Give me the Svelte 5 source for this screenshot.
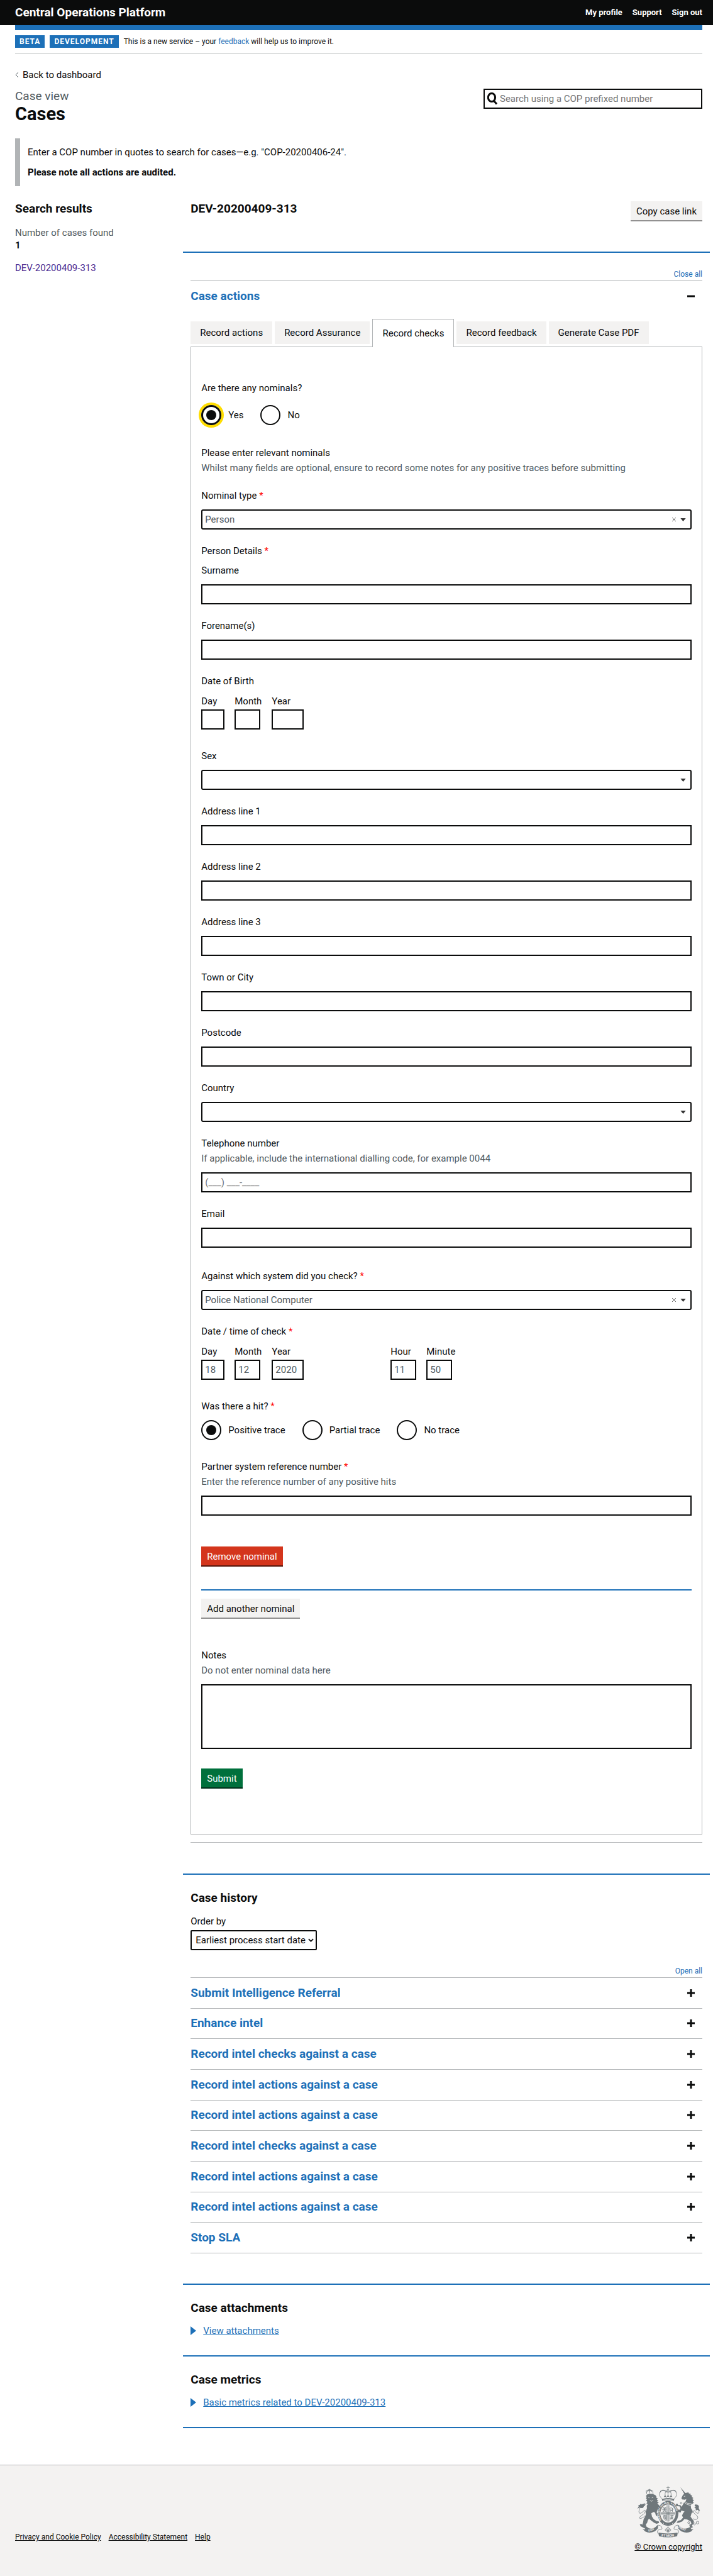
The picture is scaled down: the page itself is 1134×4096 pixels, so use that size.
<script>
  const headerLinks = ['My profile', 'Support', 'Sign out'];
  const tabs = ['Record actions', 'Record Assurance', 'Record checks', 'Record feedback', 'Generate Case PDF'];
  const activeTab = 'Record checks';

  const personFields = [
    { id: 'surname', label: 'Surname', kind: 'text' },
    { id: 'forenames', label: 'Forename(s)', kind: 'text' },
    {
      id: 'dob',
      label: 'Date of Birth',
      kind: 'date',
      parts: [
        { label: 'Day', size: 'day', value: '' },
        { label: 'Month', size: 'month', value: '' },
        { label: 'Year', size: 'year', value: '' }
      ]
    },
    { id: 'sex', label: 'Sex', kind: 'select' },
    { id: 'address1', label: 'Address line 1', kind: 'text' },
    { id: 'address2', label: 'Address line 2', kind: 'text' },
    { id: 'address3', label: 'Address line 3', kind: 'text' },
    { id: 'town', label: 'Town or City', kind: 'text' },
    { id: 'postcode', label: 'Postcode', kind: 'text' },
    { id: 'country', label: 'Country', kind: 'select' },
    {
      id: 'telephone',
      label: 'Telephone number',
      kind: 'text',
      hint: 'If applicable, include the international dialling code, for example 0044',
      placeholder: '(___) ___-____'
    },
    { id: 'email', label: 'Email', kind: 'text' }
  ];

  const checkDate = [
    { label: 'Day', size: 'day', value: '18' },
    { label: 'Month', size: 'month', value: '12' },
    { label: 'Year', size: 'year', value: '2020' }
  ];
  const checkTime = [
    { label: 'Hour', size: 'month', value: '11' },
    { label: 'Minute', size: 'month', value: '50' }
  ];
  const traces = ['Positive trace', 'Partial trace', 'No trace'];

  const history = [
    'Submit Intelligence Referral',
    'Enhance intel',
    'Record intel checks against a case',
    'Record intel actions against a case',
    'Record intel actions against a case',
    'Record intel checks against a case',
    'Record intel actions against a case',
    'Record intel actions against a case',
    'Stop SLA'
  ];
  const footerLinks = ['Privacy and Cookie Policy', 'Accessibility Statement', 'Help'];
</script>

{#snippet required()}<span class="required">*</span>{/snippet}

{#snippet dateParts(prefix, parts)}
  <div class="date-parts">
    {#each parts as part}
      <div class="date-part">
        <label for="{prefix}-{part.label}">{part.label}</label>
        <input id="{prefix}-{part.label}" class="box {part.size}" type="text" inputmode="numeric" value={part.value} />
      </div>
    {/each}
  </div>
{/snippet}

{#snippet dropdown(id, value)}
  <div class="dropdown">
    <select {id} class="box">
      <option>{value}</option>
    </select>
    {#if value}
      <button type="button" class="clear" aria-label="Clear selection">
        <svg viewBox="0 0 8 8" aria-hidden="true"><path d="M1 1L7 7M7 1L1 7" /></svg>
      </button>
    {/if}
    <svg class="caret" viewBox="0 0 10 6" aria-hidden="true"><path d="M0 0H10L5 6Z" /></svg>
  </div>
{/snippet}

<header class="top">
  <a class="brand" href="#home">Central Operations Platform</a>
  <nav>
    {#each headerLinks as link}
      <a href="#nav">{link}</a>
    {/each}
  </nav>
</header>

<div class="container">
  <div class="phase">
    <strong class="tag">BETA</strong>
    <strong class="tag">DEVELOPMENT</strong>
    <span>This is a new service – your <a href="#feedback">feedback</a> will help us to improve it.</span>
  </div>

  <main>
    <a class="back" href="#dashboard">
      <svg viewBox="0 0 6 10" aria-hidden="true"><path d="M5 1L1 5L5 9" /></svg>
      Back to dashboard
    </a>

    <div class="title-row">
      <div>
        <span class="caption">Case view</span>
        <h1>Cases</h1>
      </div>
      <div class="search">
        <svg viewBox="0 0 16 20" aria-hidden="true">
          <ellipse cx="7" cy="8" rx="5.6" ry="6.6" />
          <path d="M10.6 13.4L15 18.4" />
        </svg>
        <input type="text" aria-label="Search cases" placeholder="Search using a COP prefixed number" />
      </div>
    </div>

    <div class="inset">
      <p>Enter a COP number in quotes to search for cases—e.g. "COP-20200406-24".</p>
      <p><strong>Please note all actions are audited.</strong></p>
    </div>

    <div class="columns">
      <aside>
        <h2>Search results</h2>
        <p class="muted found">Number of cases found</p>
        <p class="count">1</p>
        <a class="visited" href="#case">DEV-20200409-313</a>
      </aside>

      <div class="case">
        <div class="case-head">
          <h2>DEV-20200409-313</h2>
          <button type="button" class="button secondary">Copy case link</button>
        </div>

        <section class="actions">
          <button type="button" class="toggle-all">Close all</button>
          <div class="accordion-head">
            <button type="button" class="accordion-title" aria-expanded="true">
              Case actions
              <svg viewBox="0 0 12 12" aria-hidden="true"><path d="M0 6H12" /></svg>
            </button>
          </div>

          <div class="tabs" role="tablist">
            {#each tabs as tab}
              <button type="button" role="tab" aria-selected={tab === activeTab} class="tab" class:selected={tab === activeTab}>{tab}</button>
            {/each}
          </div>

          <form class="panel">
            <fieldset class="after-radios">
              <legend class="spaced">Are there any nominals?</legend>
              <div class="radios">
                <label><input class="focused" type="radio" name="nominals" checked />Yes</label>
                <label><input type="radio" name="nominals" />No</label>
              </div>
            </fieldset>

            <div class="field">
              <p>Please enter relevant nominals</p>
              <p class="hint">Whilst many fields are optional, ensure to record some notes for any positive traces before submitting</p>
            </div>

            <div class="field">
              <label for="nominal-type">Nominal type {@render required()}</label>
              {@render dropdown('nominal-type', 'Person')}
            </div>

            <p class="group-label">Person Details {@render required()}</p>

            {#each personFields as field}
              {#if field.kind === 'date'}
                <fieldset class="field date">
                  <legend>{field.label}</legend>
                  {@render dateParts(field.id, field.parts)}
                </fieldset>
              {:else}
                <div class="field">
                  <label for={field.id}>{field.label}</label>
                  {#if field.hint}<p class="hint">{field.hint}</p>{/if}
                  {#if field.kind === 'select'}
                    {@render dropdown(field.id, '')}
                  {:else}
                    <input id={field.id} class="box control" type="text" placeholder={field.placeholder} />
                  {/if}
                </div>
              {/if}
            {/each}

            <div class="field system">
              <label for="system">Against which system did you check? {@render required()}</label>
              {@render dropdown('system', 'Police National Computer')}
            </div>

            <fieldset class="field date">
              <legend>Date / time of check {@render required()}</legend>
              <div class="date-time">
                {@render dateParts('check', checkDate)}
                {@render dateParts('check', checkTime)}
              </div>
            </fieldset>

            <fieldset class="trace">
              <legend>Was there a hit? {@render required()}</legend>
              <div class="radios">
                {#each traces as trace, i}
                  <label><input type="radio" name="trace" checked={i === 0} />{trace}</label>
                {/each}
              </div>
            </fieldset>

            <div class="field">
              <label for="reference">Partner system reference number {@render required()}</label>
              <p class="hint">Enter the reference number of any positive hits</p>
              <input id="reference" class="box control" type="text" />
            </div>

            <div class="remove">
              <button type="button" class="button warning">Remove nominal</button>
            </div>
            <button type="button" class="button secondary">Add another nominal</button>

            <div class="field notes">
              <label for="notes">Notes</label>
              <p class="hint">Do not enter nominal data here</p>
              <textarea id="notes" class="box control"></textarea>
            </div>
            <button type="submit" class="button">Submit</button>
          </form>
        </section>

        <section class="history">
          <h2>Case history</h2>
          <label for="order">Order by</label>
          <div class="order">
            <select id="order" class="box">
              <option>Earliest process start date</option>
            </select>
            <svg viewBox="0 0 10 8" aria-hidden="true"><path d="M1 2L5 6L9 2" /></svg>
          </div>
          <button type="button" class="toggle-all">Open all</button>
          <div class="rows">
            {#each history as item}
              <button type="button" class="accordion-title" aria-expanded="false">
                {item}
                <svg viewBox="0 0 12 12" aria-hidden="true"><path d="M0 6H12M6 0V12" /></svg>
              </button>
            {/each}
          </div>
        </section>

        <section class="extra">
          <h2>Case attachments</h2>
          <details><summary><span>View attachments</span></summary></details>
        </section>
        <section class="extra last">
          <h2>Case metrics</h2>
          <details><summary><span>Basic metrics related to DEV-20200409-313</span></summary></details>
        </section>
      </div>
    </div>
  </main>
</div>

<footer>
  <nav>
    {#each footerLinks as link}
      <a href="#footer">{link}</a>
    {/each}
  </nav>
  <a class="crown" href="#copyright">
    <svg class="crest" viewBox="90 80 380 315" aria-hidden="true">
      <defs>
        <path id="garter" d="M237 286A50 60 0 1 1 315 286" />
        <path id="dieu" d="M160 356Q190 350 214 328" />
        <path id="mon" d="M236 383Q276 392 321 383" />
        <path id="droit" d="M337 331Q360 350 400 357" />
      </defs>
      <g class="solid">
        <!-- lion -->
        <path d="M150 134L165 129L183 130L200 137L207 146L206 153L215 158L209 164L219 170L210 174L221 183L212 186L222 198L229 210L218 212L230 229L222 228L216 219L208 240L219 255L211 253L213 266L203 258L199 242L189 238L176 246L180 266L190 281L206 292L220 294L223 304L207 309L193 302L176 290L162 278L155 289L151 303L143 314L147 326L160 334L157 341L142 339L127 332L113 324L107 314L116 309L122 315L127 300L130 282L139 266L144 252L142 238L150 216L149 202L155 190L147 188L153 177L145 172L150 163L144 156L149 149L144 143Z" />
        <path d="M125 190L137 187L144 193L135 195L140 201L132 204L127 214L114 215L105 211L93 220L101 204L97 199L107 196L114 188L117 193Z" />
        <!-- unicorn -->
        <path d="M350 90L383 128L374 131Z" />
        <path d="M365 137L377 126L398 121L401 127L413 130L410 136L422 142L417 147L428 155L421 160L432 170L424 174L430 184L412 196L414 216L423 231L416 249L411 267L422 282L431 293L429 306L418 321L426 329L411 335L405 323L416 306L411 294L389 283L374 281L361 295L341 302L327 303L335 291L352 287L366 272L360 259L367 244L375 236L356 229L352 241L337 238L330 230L337 223L347 225L351 215L345 205L330 204L322 198L327 188L336 191L334 197L350 197L357 207L364 196L371 183L382 174L386 160L377 165L361 163L356 156Z" />
        <path d="M437 193L451 194L461 202L460 216L468 233L451 225L443 230L441 216L433 210L442 206L435 201Z" />
        <!-- crown -->
        <path d="M239 161Q276 149 314 161L309 174Q276 164 243 174Z" />
        <path d="M250 149L258 138L268 149L276 135L285 149L295 138L303 149Q276 143 250 149Z" />
      </g>
      <g class="line">
        <path d="M114 205C101 224 98 244 108 246C121 248 142 213 140 235C137 253 110 259 106 272C103 284 129 273 139 260" />
        <path d="M448 207C466 232 464 248 453 246C438 242 437 224 429 232C423 246 449 255 454 268C457 284 438 288 425 278" />
        <path d="M243 162C231 150 220 139 227 122C235 105 257 109 267 119M309 162C321 150 333 139 326 122C318 105 297 109 286 119M276 113V141M263 117Q276 124 290 117M263 117C254 130 260 145 266 154M290 117C299 130 293 145 287 154" />
        <path d="M149 130L145 112M187 130L184 112M145 112Q150 101 163 115Q178 101 184 112M165 127V100M158 105H172" />
        <circle cx="276" cy="107" r="5" />
        <path d="M276 83V101M267 93H286" />
      </g>
      <g class="dots">
        <path d="M228 121C236 103 260 105 272 118M281 118C297 105 318 103 325 121M148 119Q164 98 183 118" />
      </g>
      <ellipse class="band" cx="276" cy="247" rx="62" ry="74" />
      <ellipse class="shield" cx="276" cy="247" rx="46" ry="54" />
      <g class="line">
        <path d="M276 196V298M232 246H320M270 198V294M282 198V294M234 240H318M234 252H318" />
        <path d="M245 215H266M242 224H266M243 233H266M250 209L263 237M263 209L248 238M288 260H311M288 269H308M288 278H302M295 257L305 282M304 257L292 284" />
        <path d="M291 235L288 216Q297 208 308 223L302 217L303 236L297 225ZM248 260L252 280L264 289M253 258L257 279M259 258L262 282M266 258V286M248 260H266" />
      </g>
      <g class="solid">
        <path d="M146 329Q170 346 199 331L214 316Q226 336 197 354Q164 368 140 355L123 339L135 343Z" />
        <path d="M407 329Q381 346 354 331L338 316Q326 336 356 354Q389 368 414 355L429 339L418 343Z" />
        <path d="M219 362Q276 373 333 362L331 383Q276 397 222 383Z" />
      </g>
      <g class="line">
        <path d="M217 317C232 318 239 327 240 336C241 350 223 338 214 350Q208 360 221 372M335 317C320 318 313 327 312 336C311 350 330 338 338 350Q344 360 331 372" />
        <path d="M276 326C265 338 270 348 276 357C282 348 287 338 276 326M276 350C270 333 257 337 260 349C265 354 271 349 276 350C282 333 295 337 292 349C287 354 281 349 276 350M268 357H285M276 350V365" />
        <circle cx="400" cy="302" r="6" /><circle cx="411" cy="317" r="6" /><circle cx="434" cy="310" r="6" /><circle cx="453" cy="302" r="8" /><circle cx="402" cy="282" r="4" /><circle cx="420" cy="238" r="5" /><circle cx="355" cy="185" r="5" />
      </g>
      <g class="cut">
        <path d="M158 151L165 154M179 154L188 150M168 171L179 174L187 169M371 145L379 144M368 176L389 193L412 199M371 170L391 186L419 190M246 168Q276 158 306 168M245 303L252 308M262 311H266M286 311H290M301 308L308 303" />
      </g>
      <g class="motto">
        <text class="small"><textPath href="#garter">HONI SOIT QUI MAL Y PENSE</textPath></text>
        <text><textPath href="#dieu">DIEU</textPath></text>
        <text class="large"><textPath href="#mon">ET MON</textPath></text>
        <text><textPath href="#droit">DROIT</textPath></text>
      </g>
    </svg>
    <span>© Crown copyright</span>
  </a>
</footer>

<style>
  :global(body) {
    margin: 0;
    background: #fff;
    color: #0b0c0c;
    font-family: Roboto, "Liberation Sans", sans-serif;
    font-size: 15px;
    line-height: 20px;
  }
  :global(*) {
    box-sizing: border-box;
  }
  p, h1, h2, fieldset, legend {
    margin: 0;
    padding: 0;
    border: 0;
  }
  button, input, select, textarea {
    margin: 0;
    border-radius: 0;
    font: inherit;
    color: inherit;
  }
  a {
    color: #1d70b8;
    text-decoration: none;
  }
  h2 {
    font-size: 19px;
    line-height: 24px;
  }
  .muted, .hint {
    color: #505a5f;
  }

  .top {
    display: flex;
    justify-content: space-between;
    align-items: center;
    min-height: 40px;
    padding: 0 17px 0 24px;
    background: #0b0c0c;
    font-weight: 700;
  }
  .top a {
    color: #fff;
  }
  .brand {
    font-size: 19px;
  }
  .top nav {
    display: flex;
    gap: 16px;
    font-size: 13px;
  }

  .container {
    padding: 0 17px 0 24px;
  }
  .phase {
    display: flex;
    align-items: center;
    gap: 8px;
    padding: 8px 0;
    border-top: 8px solid #1d70b8;
    border-bottom: 1px solid #b1b4b6;
    font-size: 12px;
  }
  .tag {
    padding: 0 7px;
    background: #1d70b8;
    color: #fff;
    letter-spacing: 1px;
  }

  .back {
    display: flex;
    width: fit-content;
    align-items: center;
    gap: 6px;
    margin-top: 24px;
    color: #0b0c0c;
  }
  .back svg {
    width: 6px;
    height: 10px;
    fill: none;
    stroke: #505a5f;
  }
  .title-row {
    display: flex;
    justify-content: space-between;
    align-items: flex-start;
    margin-top: 12px;
  }
  .caption {
    display: block;
    color: #505a5f;
    font-size: 19px;
    line-height: 24px;
  }
  h1 {
    font-size: 29px;
    line-height: 32px;
  }
  .search {
    display: flex;
    align-items: center;
    width: 348px;
    height: 32px;
    padding-left: 4px;
    border: 2px solid #0b0c0c;
  }
  .search svg {
    width: 16px;
    height: 20px;
    fill: none;
    stroke: #0b0c0c;
    stroke-width: 3;
  }
  .search input {
    flex: 1;
    min-width: 0;
    padding: 0 4px;
    border: 0;
    outline: 0;
  }
  .search input::placeholder {
    color: #757575;
  }

  .inset {
    margin: 23px 0 24px;
    padding: 12px;
    border-left: 8px solid #b1b4b6;
  }
  .inset p + p {
    margin-top: 12px;
  }

  .columns {
    display: flex;
  }
  aside {
    flex: none;
    width: calc(25% + 6px);
  }
  .found {
    margin-top: 16px;
  }
  .count {
    font-weight: 700;
  }
  .visited {
    display: block;
    margin-top: 16px;
    color: #4c2c92;
  }
  .case {
    flex: 1;
    min-width: 0;
  }
  .case-head {
    display: flex;
    justify-content: space-between;
    align-items: flex-start;
  }

  .button {
    display: block;
    height: 32px;
    padding: 0 9px;
    border: 0;
    background: #00703c;
    color: #fff;
    box-shadow: inset 0 -2px 0 #002d18;
    line-height: 30px;
  }
  .secondary {
    background: #f3f2f1;
    color: #0b0c0c;
    box-shadow: inset 0 -2px 0 #929191;
  }
  .warning {
    background: #d4351c;
    box-shadow: inset 0 -2px 0 #55150b;
  }

  .actions, .history, .extra {
    display: flow-root;
    margin: 48px -12px 0;
    padding: 0 12px;
    border-top: 2px solid #1d70b8;
  }
  .toggle-all {
    display: block;
    margin: 24px 0 0 auto;
    padding: 0;
    border: 0;
    background: none;
    color: #1d70b8;
    font-size: 12px;
    line-height: 20px;
  }
  .accordion-head {
    border-top: 1px solid #b1b4b6;
  }
  .accordion-title {
    display: flex;
    justify-content: space-between;
    align-items: center;
    width: 100%;
    min-height: 48px;
    padding: 0 12px 0 0;
    border: 0;
    background: none;
    color: #1d70b8;
    font-size: 19px;
    font-weight: 700;
    text-align: left;
  }
  .accordion-title svg {
    width: 12px;
    height: 12px;
    stroke: #0b0c0c;
    stroke-width: 3;
  }

  .tabs {
    display: flex;
    align-items: flex-start;
    gap: 4px;
    margin-top: 12px;
  }
  .tab {
    height: 36px;
    margin-top: 4px;
    padding: 0 15px;
    border: 0;
    background: #f3f2f1;
  }
  .tab.selected {
    position: relative;
    height: 45px;
    margin: 0 0 -1px;
    padding-bottom: 1px;
    border: 1px solid #b1b4b6;
    border-bottom: 0;
    background: #fff;
  }

  .panel {
    margin-bottom: 12px;
    padding: 55px 16px 72px;
    border: 1px solid #b1b4b6;
  }
  .panel label, .panel legend {
    display: block;
  }
  .required {
    color: #f00;
  }
  .radios {
    display: flex;
    gap: 27px;
    margin-top: 12px;
  }
  .spaced {
    margin-bottom: 17px;
  }
  .spaced + .radios {
    margin-top: 0;
  }
  .panel .radios label {
    display: flex;
    align-items: center;
    gap: 11px;
  }
  .radios input {
    display: grid;
    place-content: center;
    width: 32px;
    height: 32px;
    border: 2px solid #0b0c0c;
    border-radius: 50%;
    appearance: none;
  }
  .radios input:checked::before {
    width: 16px;
    height: 16px;
    border-radius: 50%;
    background: #0b0c0c;
    content: "";
  }
  .radios .focused {
    border-width: 3px;
    box-shadow: 0 0 0 4px #fd0;
  }
  .after-radios {
    margin-bottom: 34px;
  }
  .field {
    margin-bottom: 24px;
  }
  .field.date, .trace {
    margin-bottom: 32px;
  }
  .hint {
    margin-top: 4px;
  }
  .group-label {
    margin-bottom: 11px;
  }
  .box {
    display: block;
    height: 32px;
    padding: 0 4px;
    border: 2px solid #0b0c0c;
    background: #fff;
    color: #505a5f;
    outline: 0;
  }
  .control, .dropdown {
    width: 100%;
    margin-top: 12px;
  }
  .box::placeholder {
    color: #757575;
  }
  .dropdown {
    position: relative;
  }
  select {
    appearance: none;
  }
  .dropdown select {
    width: 100%;
    border-radius: 3px;
  }
  .caret {
    position: absolute;
    top: 14px;
    right: 9px;
    width: 9px;
    height: 5px;
    fill: #333;
    pointer-events: none;
  }
  .clear {
    position: absolute;
    top: 8px;
    right: 20px;
    display: grid;
    place-items: center;
    width: 16px;
    height: 16px;
    padding: 0;
    border: 0;
    background: none;
  }
  .clear svg {
    width: 8px;
    height: 8px;
    stroke: #666;
  }
  .date-parts {
    display: flex;
    gap: 16px;
    margin-top: 12px;
  }
  .date-part {
    min-width: 37px;
  }
  .date-part .box {
    margin-top: 3px;
  }
  .day {
    width: 37px;
  }
  .month {
    width: 41px;
  }
  .year {
    width: 51px;
  }
  .date-time {
    display: grid;
    grid-template-columns: 301px 1fr;
  }
  .system {
    margin-top: 35px;
  }
  .remove {
    margin: 49px 0 13px;
    padding-bottom: 36px;
    border-bottom: 2px solid #1d70b8;
  }
  .notes {
    margin: 48px 0 31px;
  }
  textarea.box {
    height: 103px;
    resize: none;
  }

  .actions {
    padding-bottom: 49px;
  }
  .actions::after {
    display: block;
    border-top: 1px solid #b1b4b6;
    content: "";
  }
  .history {
    margin-top: 0;
    padding-top: 25px;
    padding-bottom: 48px;
  }
  .history label {
    display: block;
    margin: 15px 0 4px;
  }
  .order {
    position: relative;
    width: fit-content;
  }
  .order select {
    min-width: 199px;
    padding: 0 16px 0 6px;
    border-radius: 2px;
    color: #0b0c0c;
  }
  .order svg {
    position: absolute;
    top: 12px;
    right: 5px;
    width: 9px;
    height: 8px;
    fill: none;
    stroke: #0b0c0c;
    stroke-width: 2;
    pointer-events: none;
  }
  .history .toggle-all {
    margin-top: 23px;
  }
  .rows {
    display: grid;
    grid-auto-rows: 1fr;
    min-height: 439px;
    border-bottom: 1px solid #b1b4b6;
  }
  .rows .accordion-title {
    border-top: 1px solid #b1b4b6;
  }
  .extra {
    margin-top: 0;
    padding-top: 25px;
    padding-bottom: 29px;
  }
  .extra.last {
    margin-bottom: 58px;
    border-bottom: 2px solid #1d70b8;
  }
  details {
    margin-top: 14px;
  }
  summary {
    display: flex;
    align-items: center;
    gap: 11px;
    color: #1d70b8;
    list-style: none;
  }
  summary::before {
    border: 7px solid transparent;
    border-right: 0;
    border-left: 9px solid #1d70b8;
    content: "";
  }
  summary span {
    text-decoration: underline;
  }

  footer {
    display: flex;
    justify-content: space-between;
    align-items: flex-end;
    padding: 32px 17px 37px 24px;
    border-top: 1px solid #b1b4b6;
    background: #f3f2f1;
    font-size: 12px;
  }
  footer a {
    color: #0b0c0c;
    text-decoration: underline;
  }
  footer nav {
    display: flex;
    gap: 12px;
    margin-bottom: 16px;
  }
  .crown {
    display: flex;
    flex-direction: column;
    align-items: center;
    gap: 4px;
    font-size: 13px;
  }
  .crest {
    width: 101px;
    height: 84px;
  }
  .solid, .band {
    fill: #6f777b;
  }
  .line {
    fill: none;
    stroke: #6f777b;
    stroke-width: 3;
  }
  .dots {
    fill: none;
    stroke: #6f777b;
    stroke-dasharray: 0 7;
    stroke-linecap: round;
    stroke-width: 6;
  }
  .shield {
    fill: #f3f2f1;
  }
  .cut {
    fill: none;
    stroke: #f3f2f1;
    stroke-width: 3;
  }
  .motto {
    fill: #f3f2f1;
    font-size: 17px;
    font-weight: 700;
  }
  .motto .small {
    font-size: 15px;
  }
  .motto .large {
    font-size: 21px;
  }
</style>
